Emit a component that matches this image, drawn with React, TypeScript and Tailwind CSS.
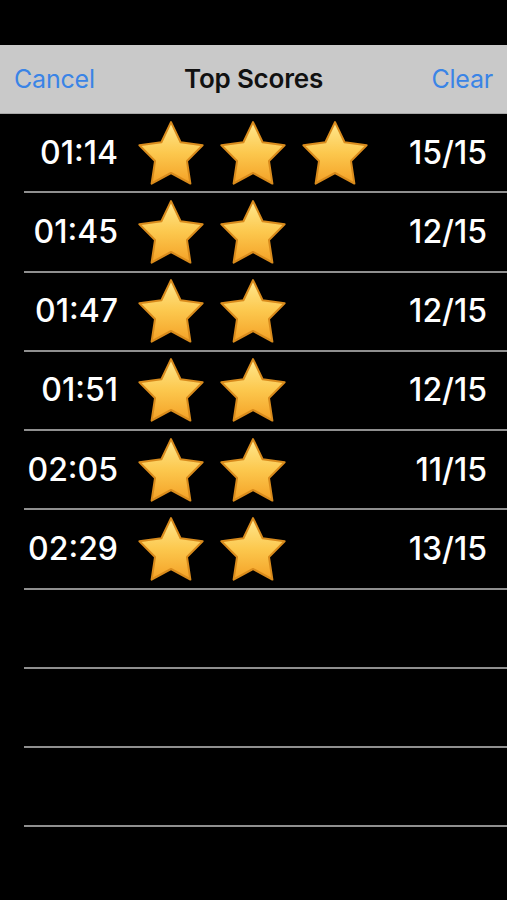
import React from "react";

const rows = [
  { time: "01:14", stars: 3, score: "15/15" },
  { time: "01:45", stars: 2, score: "12/15" },
  { time: "01:47", stars: 2, score: "12/15" },
  { time: "01:51", stars: 2, score: "12/15" },
  { time: "02:05", stars: 2, score: "11/15" },
  { time: "02:29", stars: 2, score: "13/15" },
  { time: "", stars: 0, score: "" },
  { time: "", stars: 0, score: "" },
  { time: "", stars: 0, score: "" },
];

function Star({ id }: { id: string }) {
  return (
    <svg width="68" height="66" viewBox="0 -1 100 94" preserveAspectRatio="none" className="shrink-0">
      <defs>
        <linearGradient id={id} x1="0" y1="0" x2="0" y2="1">
          <stop offset="0" stopColor="#FFE88F" />
          <stop offset="0.5" stopColor="#FCC84E" />
          <stop offset="1" stopColor="#F4A126" />
        </linearGradient>
      </defs>
      <polygon
        points="50,2 64.1,30.6 96.5,35 73.5,57.5 78.5,89.5 50,74.5 21.5,89.5 26.5,57.5 3.5,35 35.9,30.6"
        fill={`url(#${id})`}
        stroke="#D98B1C"
        strokeWidth="3"
        strokeLinejoin="round"
      />
    </svg>
  );
}

export default function App() {
  return (
    <div className="w-[507px] h-[900px] bg-black overflow-hidden" style={{ fontFamily: "Inter, 'Liberation Sans', Arial, sans-serif" }}>
      <div className="h-[45px] bg-black" />
      <div className="h-[69px] bg-[#c9c9c9] border-b border-[#a8a8a8] flex items-center justify-between px-[14px] relative">
        <span className="text-[25px] text-[#3a84e6] leading-none tracking-[-0.2px]">Cancel</span>
        <span className="absolute left-0 right-0 text-center text-[26px] font-semibold text-[#111] leading-none pointer-events-none tracking-[-0.2px]">Top Scores</span>
        <span className="text-[25px] text-[#3a84e6] leading-none tracking-[-0.2px]">Clear</span>
      </div>
      {rows.map((r, i) => (
        <div key={i}>
          <div className="h-[77.25px] flex items-center">
            <div className="w-[118px] text-right text-white text-[32px] font-medium leading-none">{r.time}</div>
            <div className="ml-[19px] flex gap-[14px] w-[232px]">
              {Array.from({ length: r.stars }).map((_, j) => (
                <Star key={j} id={`g${i}-${j}`} />
              ))}
            </div>
            <div className="flex-1 pr-[20px] text-right text-white text-[32px] font-medium leading-none">{r.score}</div>
          </div>
          <div className="ml-[24px] h-[2px] bg-[#8f8f8f]" />
        </div>
      ))}
    </div>
  );
}
